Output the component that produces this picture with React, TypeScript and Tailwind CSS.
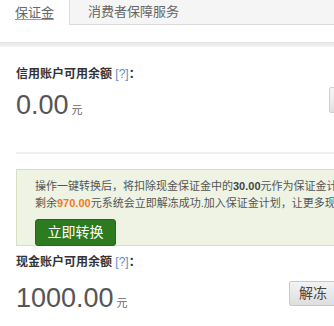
export default function App() {
  const cjk = "font-['Liberation_Sans','Noto_Sans_CJK_SC',sans-serif]";
  return (
    <div className={`w-[334px] h-[326px] overflow-hidden bg-white ${cjk}`}>
      {/* Tabs */}
      <div className="flex h-[25px] w-[400px]">
        <div className="w-[69px] flex items-center justify-center text-[13px] text-[#666] underline underline-offset-2 decoration-[#999]">
          保证金
        </div>
        <div className="flex-1 flex items-center pl-[18px] bg-[#f5f5f5] border-l border-b border-[#dcdcdc] text-[13px] text-[#666]">
          消费者保障服务
        </div>
      </div>
      <div className="h-[17px]" />
      <div className="h-[5px] bg-gradient-to-b from-[#e4e4e4] to-[#f4f4f4]" />

      <div className="pl-[16px] w-[520px]">
        {/* Credit account */}
        <div className="pt-[19px] h-[35px] text-[12px] leading-[16px] font-bold text-[#333]">
          信用账户可用余额 <span className="font-normal text-[#5a8fc4]">[?]</span>：
        </div>
        <div className="flex items-start h-[40px]">
          <div className="w-[313px] flex items-baseline pt-[8px]">
            <span className="text-[27px] leading-[30px] text-[#555]">0.00</span>
            <span className="ml-[3px] text-[11px] text-[#666]">元</span>
          </div>
          <div className="mt-[5px] h-[26px] w-[60px] rounded-[2px] border border-[#cfcfcf] bg-gradient-to-b from-[#f6f6f6] to-[#e2e2e2]" />
        </div>

        <div className="mt-[30px] h-[2px] bg-[#f0f0f0]" />

        {/* Notice */}
        <div className="mt-[15px] h-[77px] border border-[#d6e0c6] bg-[#eef3e4] pl-[18px] pt-[8px] text-[11px] leading-[17px] text-[#555] whitespace-nowrap">
          <div>
            操作一键转换后，将扣除现金保证金中的<b className="text-[#444]">30.00</b>元作为保证金计划保证金，
          </div>
          <div>
            剩余<b className="text-[#f07a1e]">970.00</b>元系统会立即解冻成功.加入保证金计划，让更多现金流动起来。
          </div>
          <div className="mt-[7px] w-[81px] h-[27px] rounded-[3px] bg-[#2e7b1f] border border-[#256818] flex items-center justify-center text-[14px] text-white">
            立即转换
          </div>
        </div>

        {/* Cash account */}
        <div className="pt-[8px] h-[26px] text-[12px] leading-[16px] font-bold text-[#333]">
          现金账户可用余额 <span className="font-normal text-[#5a8fc4]">[?]</span>：
        </div>
        <div className="flex items-start">
          <div className="w-[273px] flex items-baseline pt-[11px]">
            <span className="text-[27px] leading-[30px] text-[#555]">1000.00</span>
            <span className="ml-[3px] text-[11px] text-[#666]">元</span>
          </div>
          <div className="mt-[9px] h-[25px] px-[9px] flex items-center rounded-[2px] border border-[#c9c9c9] bg-gradient-to-b from-[#f3f3f3] to-[#dedede] text-[14px] text-[#444]">
            解冻
          </div>
        </div>
      </div>
    </div>
  );
}
